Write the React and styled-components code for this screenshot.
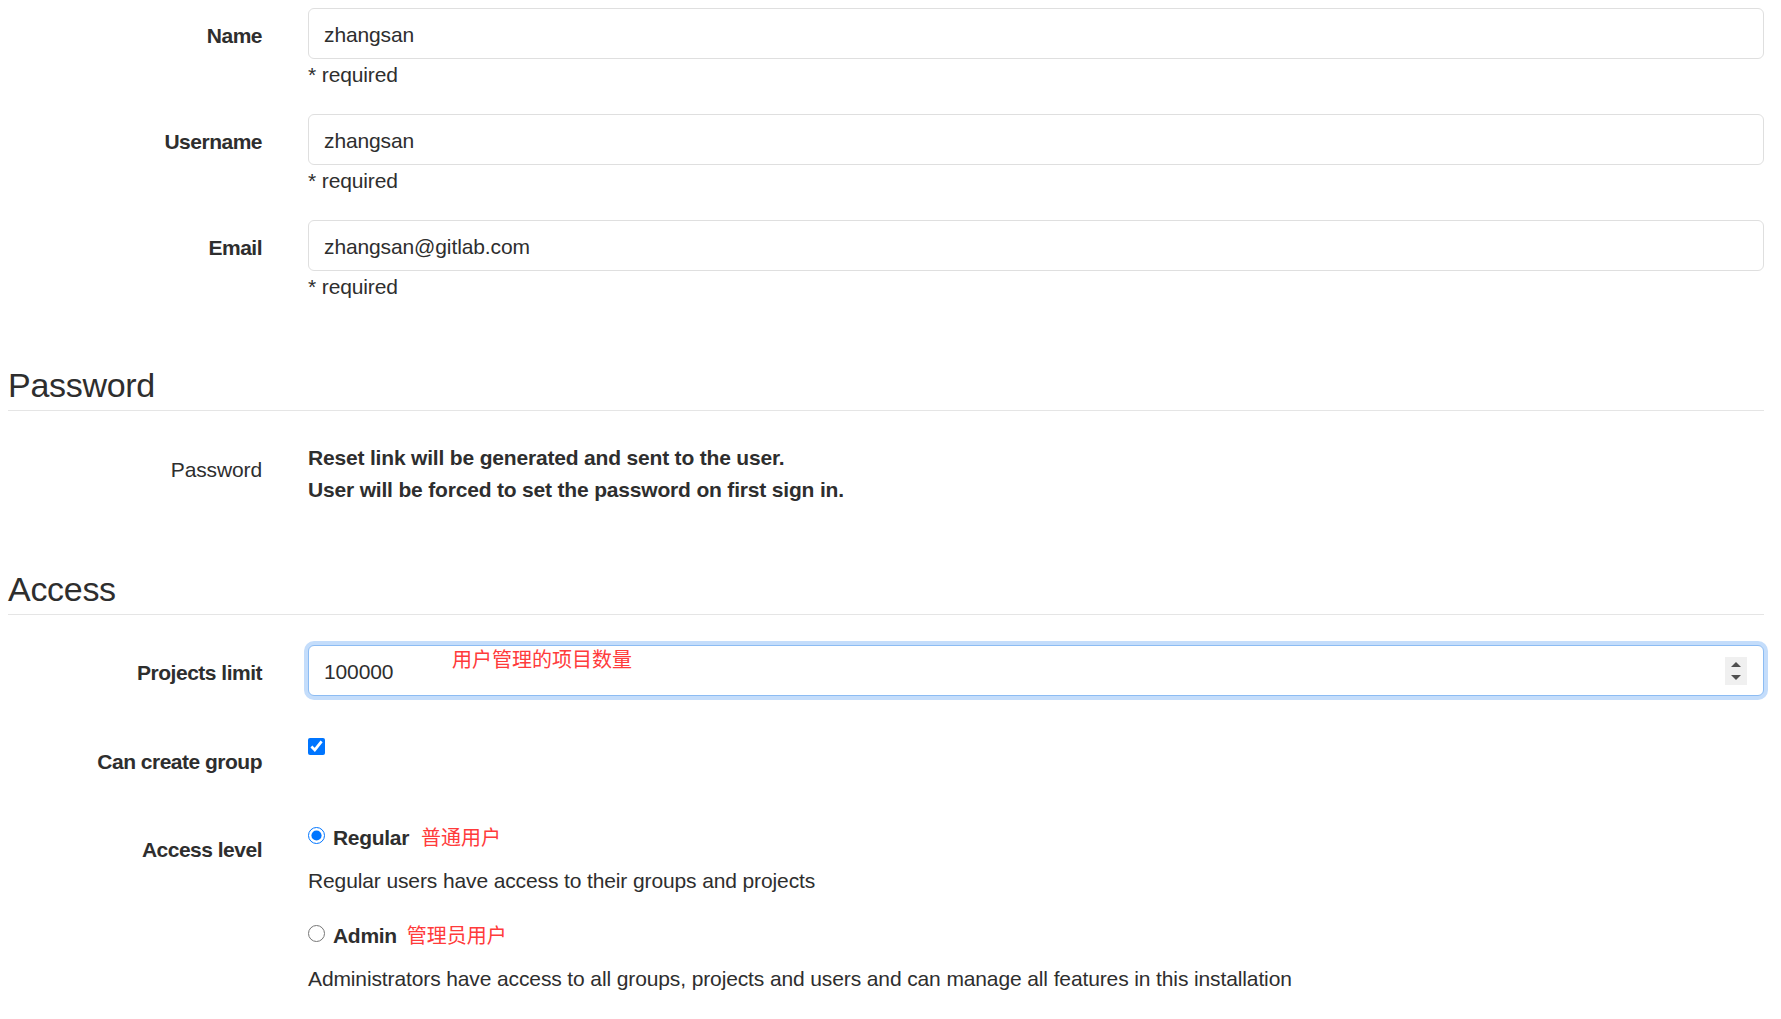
import styled, { createGlobalStyle } from "styled-components";

const GlobalStyle = createGlobalStyle`
  body {
    margin: 0;
    background: #fff;
    color: #2e2e2e;
    font-family: "Liberation Sans", Arial, sans-serif;
    font-size: 21px;
    letter-spacing: -0.12px;
  }
  * {
    box-sizing: border-box;
  }
`;

const Page = styled.div`
  padding: 8px 17px 40px 8px;
`;

const FormRow = styled.div`
  display: grid;
  grid-template-columns: 254px 1fr;
  column-gap: 46px;
  margin-bottom: ${(p) => (p.$mb !== undefined ? p.$mb : 24)}px;
`;

const Label = styled.label`
  text-align: right;
  padding-top: 12px;
  line-height: 32px;
  font-weight: ${(p) => (p.$plain ? 400 : 700)};
  letter-spacing: ${(p) => (p.$plain ? "-0.12px" : "-0.5px")};
`;

const Field = styled.div`
  min-width: 0;
`;

const TextInput = styled.input`
  display: block;
  width: 100%;
  height: 51px;
  padding: 3px 15px 0;
  border: 1px solid #dfdfdf;
  border-radius: 6px;
  font: inherit;
  letter-spacing: inherit;
  color: #2e2e2e;
  background: #fff;
  outline: none;
`;

const Help = styled.p`
  margin: 1px 0 0;
  line-height: 30px;
`;

/* margin-top collapses with the 24px row margin above */
const SectionTitle = styled.h4`
  margin: 61px 0 ${(p) => p.$mb || 30}px;
  padding-bottom: 3px;
  border-bottom: 1px solid #e5e5e5;
  font-size: 34px;
  font-weight: 400;
  line-height: 44px;
  letter-spacing: -0.3px;
`;

const Strong = styled.p`
  margin: 0;
  font-weight: 700;
  line-height: 32px;
  letter-spacing: -0.18px;
`;

const FocusBox = styled.div`
  position: relative;
  display: flex;
  align-items: center;
  height: 51px;
  padding: 0 16px 0 15px;
  border: 1px solid #8cbcf3;
  border-radius: 6px;
  box-shadow: 0 0 0 4px #c4ddfb;
  background: #fff;
`;

const BareInput = styled.input`
  flex: 1;
  min-width: 0;
  border: none;
  outline: none;
  padding: 3px 0 0;
  font: inherit;
  letter-spacing: inherit;
  color: #2e2e2e;
  background: transparent;
`;

const Spinner = styled.div`
  width: 22px;
  height: 28px;
  background: #f0f0f0;
  display: flex;
  flex-direction: column;
  align-items: center;
  justify-content: center;
  gap: 8px;
`;

const Arrow = styled.span`
  width: 0;
  height: 0;
  border-left: 5px solid transparent;
  border-right: 5px solid transparent;
  ${(p) => (p.$down ? "border-top" : "border-bottom")}: 5px solid #505050;
`;

const Note = styled.span`
  position: absolute;
  left: 143px;
  top: 3px;
  font-family: "Noto Sans CJK SC", sans-serif;
  font-size: 20px;
  line-height: 20px;
  letter-spacing: 0;
  color: #ff3b3b;
  white-space: nowrap;
`;

const Checkbox = styled.input`
  display: block;
  width: 17px;
  height: 17px;
  margin: 4px 0 0;
  accent-color: #0075ff;
`;

const Option = styled.label`
  display: flex;
  align-items: center;
  height: 32px;
  margin-top: ${(p) => p.$mt || 0}px;
`;

const Radio = styled.input`
  width: 17px;
  height: 17px;
  margin: 0 8px 5px 0;
  accent-color: #0075ff;
`;

const OptionName = styled.span`
  font-weight: 700;
  letter-spacing: -0.3px;
`;

const CnNote = styled.span`
  margin-left: ${(p) => p.$ml}px;
  margin-bottom: 4px;
  font-family: "Noto Sans CJK SC", sans-serif;
  font-size: 20px;
  letter-spacing: 0;
  color: #ff3b3b;
`;

const Desc = styled.p`
  margin: 11px 0 0;
  line-height: 32px;
`;

const textFields = [
  { label: "Name", value: "zhangsan" },
  { label: "Username", value: "zhangsan" },
  { label: "Email", value: "zhangsan@gitlab.com" },
];

export default function App() {
  return (
    <>
      <GlobalStyle />
      <Page>
        {textFields.map((f) => (
          <FormRow key={f.label}>
            <Label>{f.label}</Label>
            <Field>
              <TextInput defaultValue={f.value} />
              <Help>* required</Help>
            </Field>
          </FormRow>
        ))}

        <SectionTitle $mb={31}>Password</SectionTitle>
        <FormRow>
          <Label $plain>Password</Label>
          <Field>
            <Strong>Reset link will be generated and sent to the user.</Strong>
            <Strong>User will be forced to set the password on first sign in.</Strong>
          </Field>
        </FormRow>

        <SectionTitle>Access</SectionTitle>
        <FormRow $mb={38}>
          <Label>Projects limit</Label>
          <Field>
            <FocusBox>
              <BareInput defaultValue="100000" />
              <Note>用户管理的项目数量</Note>
              <Spinner>
                <Arrow />
                <Arrow $down />
              </Spinner>
            </FocusBox>
          </Field>
        </FormRow>

        <FormRow $mb={44}>
          <Label>Can create group</Label>
          <Field>
            <Checkbox type="checkbox" defaultChecked />
          </Field>
        </FormRow>

        <FormRow>
          <Label>Access level</Label>
          <Field>
            <Option>
              <Radio type="radio" name="access" defaultChecked />
              <OptionName>Regular</OptionName>
              <CnNote $ml={12}>普通用户</CnNote>
            </Option>
            <Desc>Regular users have access to their groups and projects</Desc>
            <Option $mt={23}>
              <Radio type="radio" name="access" />
              <OptionName>Admin</OptionName>
              <CnNote $ml={10}>管理员用户</CnNote>
            </Option>
            <Desc>
              Administrators have access to all groups, projects and users and can
              manage all features in this installation
            </Desc>
          </Field>
        </FormRow>
      </Page>
    </>
  );
}
